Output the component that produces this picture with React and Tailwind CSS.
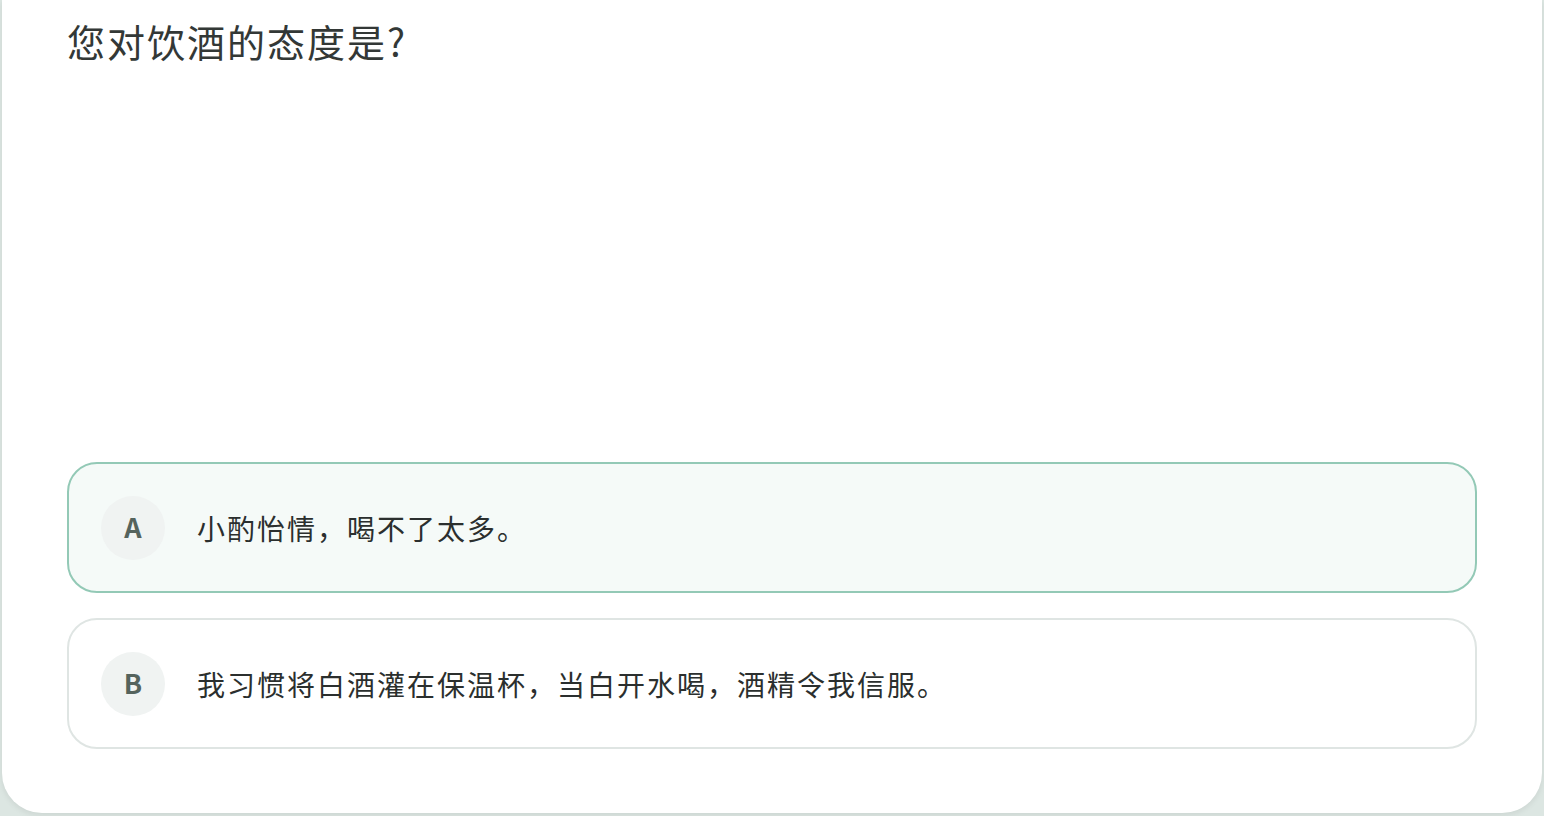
const options = [
  { key: 'A', text: '小酌怡情，喝不了太多。', selected: true },
  { key: 'B', text: '我习惯将白酒灌在保温杯，当白开水喝，酒精令我信服。', selected: false },
];

function Option({ item }) {
  return (
    <div
      className={
        item.selected
          ? 'flex items-center h-[131px] rounded-[30px] border-2 border-[#93c9b6] bg-[#f5faf8] px-[32px]'
          : 'flex items-center h-[131px] rounded-[30px] border-2 border-[#dfe5e3] bg-white px-[32px]'
      }
    >
      <div className="flex items-center justify-center w-[64px] h-[64px] rounded-full bg-[#f0f3f2] text-[27px] font-bold text-[#55635d]">
        {item.key}
      </div>
      <div className="ml-[32px] text-[28px] tracking-[2px] text-[#2b2f2e]">{item.text}</div>
    </div>
  );
}

export default function App() {
  return (
    <div
      className="h-[816px] w-full bg-[#dce6e2] px-[2px] pb-[3px]"
      style={{ fontFamily: '"Noto Sans CJK SC", "Noto Sans", sans-serif' }}
    >
      <div className="flex h-full flex-col rounded-b-[40px] bg-white px-[65px] shadow-[0_2px_6px_rgba(0,0,0,0.08)]">
        <h1 className="mt-[16px] text-[38px] leading-[50px] tracking-[2px] text-[#333836]">您对饮酒的态度是?</h1>
        <div className="mt-auto mb-[64px] flex flex-col gap-[25px]">
          {options.map((item) => (
            <Option key={item.key} item={item} />
          ))}
        </div>
      </div>
    </div>
  );
}
